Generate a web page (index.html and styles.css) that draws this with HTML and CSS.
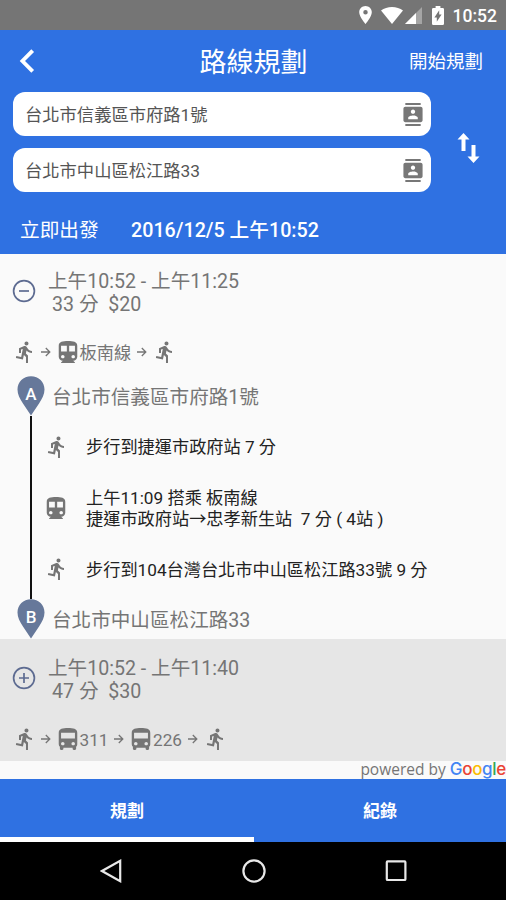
FILE: index.html
```html
<!DOCTYPE html>
<html lang="zh-Hant">
<head>
<meta charset="utf-8">
<title>路線規劃</title>
<link rel="stylesheet" href="styles.css">
</head>
<body>
<svg class="defs" width="0" height="0">
  <symbol id="run" viewBox="0 0 24 24"><path d="M13.49 5.48c1.1 0 2-.9 2-2s-.9-2-2-2-2 .9-2 2 .9 2 2 2zm-3.6 13.9l1-4.4 2.1 2v6h2v-7.5l-2.1-2 .6-3c1.3 1.5 3.3 2.5 5.5 2.5v-2c-1.9 0-3.5-1-4.3-2.4l-1-1.6c-.4-.6-1-1-1.7-1-.3 0-.5.1-.8.1l-5.2 2.2v4.7h2v-3.4l1.8-.7-1.6 8.1-4.9-1-.4 2 7 1.4z"/></symbol>
  <symbol id="train" viewBox="4 2 16 19"><path d="M12 2c-4.42 0-8 .5-8 4v9.5C4 17.43 5.57 19 7.5 19L6 20.5v.5h12v-.5L16.5 19c1.93 0 3.5-1.57 3.5-3.5V6c0-3.5-3.58-4-8-4zM7.5 17c-.83 0-1.5-.67-1.5-1.5S6.67 14 7.5 14s1.5.67 1.5 1.5S8.33 17 7.5 17zm3.5-6H6V6h5v5zm5.5 6c-.83 0-1.5-.67-1.5-1.5s.67-1.5 1.5-1.5 1.5.67 1.5 1.5-.67 1.5-1.5 1.5zm1.5-6h-5V6h5v5z"/></symbol>
  <symbol id="bus" viewBox="4 2 16 19"><path d="M4 16c0 .88.39 1.67 1 2.22V20c0 .55.45 1 1 1h1c.55 0 1-.45 1-1v-1h8v1c0 .55.45 1 1 1h1c.55 0 1-.45 1-1v-1.78c.61-.55 1-1.34 1-2.22V6c0-3.5-3.58-4-8-4s-8 .5-8 4v10zm3.5 1c-.83 0-1.5-.67-1.5-1.5S6.67 14 7.5 14s1.5.67 1.5 1.5S8.33 17 7.5 17zm9 0c-.83 0-1.5-.67-1.5-1.5s.67-1.5 1.5-1.5 1.5.67 1.5 1.5-.67 1.5-1.5 1.5zm1.5-6H6V6h12v5z"/></symbol>
  <symbol id="contacts" viewBox="2 0 20 24"><path d="M20 0H4v2h16V0zM4 24h16v-2H4v2zM20 4H4c-1.100 0-2 .9-2 2v12c0 1.100.9 2 2 2h16c1.100 0 2-.9 2-2V6c0-1.100-.9-2-2-2zm-8 2.750c1.240 0 2.250 1.010 2.250 2.250s-1.010 2.250-2.250 2.250S9.750 10.240 9.750 9 10.760 6.750 12 6.750zM17 17H7v-1.500c0-1.670 3.330-2.500 5-2.500s5 .83 5 2.500V17z"/></symbol>
  <symbol id="arrow" viewBox="0 0 10 12"><path d="M0 6h8.500M4.800 2l4 4-4 4" fill="none" stroke="currentColor" stroke-width="1.300"/></symbol>
  <symbol id="marker" viewBox="0 0 28 40"><path d="M14 .3C6.300.3.5 6 .5 13.600c0 4.900 2.300 9.200 5.300 13.600L14 39.500l8.200-12.300c3-4.400 5.300-8.700 5.300-13.600C27.500 6 21.700.3 14 .3z"/></symbol>
</svg>

<div class="status">
  <svg class="st-pin" viewBox="5 2 14 20"><path d="M12 2C8.130 2 5 5.130 5 9c0 5.250 7 13 7 13s7-7.750 7-13c0-3.870-3.130-7-7-7zm0 9.500a2.500 2.500 0 1 1 0-5 2.500 2.500 0 0 1 0 5z"/></svg>
  <svg class="st-wifi" viewBox="0 0 22 17"><path d="M11 17L0 3.600C3 1.300 6.800 0 11 0s8 1.300 11 3.600z"/></svg>
  <svg class="st-cell" viewBox="0 0 17 17"><path d="M17 0v17H0z" opacity=".35"/><path d="M11 6v11H0z"/></svg>
  <svg class="st-batt" viewBox="7 2 10 20" preserveAspectRatio="none"><path fill-rule="evenodd" d="M15.670 4H14V2h-4v2H8.330C7.600 4 7 4.600 7 5.330v15.330C7 21.400 7.600 22 8.330 22h7.330c.74 0 1.340-.6 1.340-1.330V5.330C17 4.600 16.400 4 15.670 4zM11 18.500V14H9l4-7.500V11h2z"/></svg>
  <span class="clock">10:52</span>
</div>

<header class="header">
  <div class="titlebar">
    <svg class="back" viewBox="0 0 14 22"><path d="M12.200 1.500L2.800 11l9.400 9.500"/></svg>
    <h1>路線規劃</h1>
    <span class="start">開始規劃</span>
  </div>
  <div class="search">
    <div class="fields">
      <div class="field"><span>台北市信義區市府路1號</span><svg><use href="#contacts"/></svg></div>
      <div class="field"><span>台北市中山區松江路33</span><svg><use href="#contacts"/></svg></div>
    </div>
    <svg class="swap" viewBox="0 0 22 30"><path d="M6 0l6 6.500H8V18H4V6.500H0zM14 12h4v11.500h4L16 30l-6-6.500h4z"/></svg>
  </div>
  <div class="when"><span class="now">立即出發</span><span>2016/12/5 上午10:52</span></div>
</header>

<main>
  <section class="plan">
    <div class="summary">
      <svg class="toggle" viewBox="0 0 24 24"><circle cx="12" cy="12" r="10.400"/><path d="M7 12h10"/></svg>
      <div class="times"><div>上午10:52 - 上午11:25</div><div class="cost">33 分&nbsp; $20</div></div>
    </div>
    <div class="chain">
      <svg class="run"><use href="#run"/></svg><svg class="arr"><use href="#arrow"/></svg><svg class="veh"><use href="#train"/></svg><span>板南線</span><svg class="arr"><use href="#arrow"/></svg><svg class="run"><use href="#run"/></svg>
    </div>
    <div class="place"><div class="pin"><svg><use href="#marker"/></svg><b>A</b></div><span>台北市信義區市府路1號</span></div>
    <div class="steps">
      <div class="step"><svg class="run"><use href="#run"/></svg><p>步行到捷運市政府站 7 分</p></div>
      <div class="step"><svg class="veh"><use href="#train"/></svg><p>上午11:09 搭乘 板南線<br>捷運市政府站→忠孝新生站&nbsp; 7 分 ( 4站 )</p></div>
      <div class="step"><svg class="run"><use href="#run"/></svg><p>步行到104台灣台北市中山區松江路33號 9 分</p></div>
    </div>
    <div class="place"><div class="pin"><svg><use href="#marker"/></svg><b>B</b></div><span>台北市中山區松江路33</span></div>
  </section>
  <section class="plan alt">
    <div class="summary">
      <svg class="toggle" viewBox="0 0 24 24"><circle cx="12" cy="12" r="10.400"/><path d="M7 12h10M12 7v10"/></svg>
      <div class="times"><div>上午10:52 - 上午11:40</div><div class="cost">47 分&nbsp; $30</div></div>
    </div>
    <div class="chain">
      <svg class="run"><use href="#run"/></svg><svg class="arr"><use href="#arrow"/></svg><svg class="veh"><use href="#bus"/></svg><span>311</span><svg class="arr"><use href="#arrow"/></svg><svg class="veh"><use href="#bus"/></svg><span>226</span><svg class="arr"><use href="#arrow"/></svg><svg class="run"><use href="#run"/></svg>
    </div>
  </section>
  <div class="powered">powered by <span class="google"><span class="b">G</span><span class="r">o</span><span class="y">o</span><span class="b">g</span><span class="g">l</span><span class="r">e</span></span></div>
</main>

<div class="tabs"><div class="tab active">規劃</div><div class="tab">紀錄</div></div>
<nav class="nav">
  <svg viewBox="0 0 24 24"><path d="M20.200 1.800v20.400L2 12z"/></svg>
  <svg viewBox="0 0 24 24"><circle cx="12" cy="12" r="10.600"/></svg>
  <svg viewBox="0 0 24 24"><rect x="2.800" y="2.400" width="18.600" height="18.600" rx=".8"/></svg>
</nav>
</body>
</html>
```
FILE: styles.css
```css
* { box-sizing: border-box; }
body {
  margin: 0;
  width: 506px;
  height: 900px;
  overflow: hidden;
  display: flex;
  flex-direction: column;
  background: #fafafa;
  font-family: Roboto, "Noto Sans CJK TC", sans-serif;
  color: #757575;
}
svg { display: block; flex: none; fill: currentColor; }
.defs { position: absolute; }

.status {
  height: 30px;
  flex: none;
  display: flex;
  align-items: center;
  padding: 0 9px 0 359px;
  background: #757575;
  color: #fff;
}
.st-pin { width: 13px; height: 18px; }
.st-wifi { width: 22px; height: 17px; margin-left: 9px; }
.st-cell { width: 17px; height: 17px; margin-left: 2px; }
.st-batt { width: 12px; height: 19px; margin-left: 10px; }
.clock { margin-left: auto; font-size: 17.500px; font-weight: 500; line-height: 30px; padding-top: 1px; }

.header { height: 224px; flex: none; background: #2f71e2; color: #fff; }
.titlebar {
  height: 62px;
  display: grid;
  grid-template-columns: 100px 1fr 100px;
  align-items: center;
  padding: 0 23px 0 19px;
}
.back { width: 16px; height: 24px; fill: none; stroke: #fff; stroke-width: 3.500; }
h1 { margin: 0 -5px 0 0; padding-top: 3px; text-align: center; font-size: 27px; font-weight: 400; line-height: 40px; }
.start { padding-top: 1px; text-align: right; font-size: 18.500px; line-height: 30px; }
.search { display: flex; align-items: center; padding-left: 13px; }
.fields { width: 418px; display: grid; gap: 12px; }
.field {
  height: 44px;
  display: flex;
  align-items: center;
  justify-content: space-between;
  padding: 0 8px 0 12px;
  border-radius: 12px;
  background: #fff;
  color: #555;
  font-size: 17.300px;
}
.field span { margin-top: -2px; }
.field svg { width: 20px; height: 23px; color: #777; }
.swap { width: 23px; height: 30px; margin: 12px 0 0 26px; }
.when { height: 60px; display: flex; padding: 17px 0 0 20px; font-size: 19.700px; font-weight: 500; line-height: 44px; }
.now { width: 111px; font-weight: 400; }

main { flex: 1; }
.plan { height: 385px; padding-top: 16px; }
.alt { height: 122px; background: #e6e6e6; padding-top: 18px; }
.summary { height: 46px; display: flex; align-items: center; padding-left: 12px; font-size: 19.600px; line-height: 23px; }
.toggle { width: 24px; height: 24px; margin: -4px 12px 0 0; fill: none; stroke: #5d6b91; stroke-width: 1.700; }
.cost { padding-left: 4px; }
.chain { height: 22px; margin-top: 25px; padding-left: 13px; display: flex; align-items: center; font-size: 17.200px; line-height: 22px; }
.chain span { padding-top: 1px; }
.alt .chain { margin-top: 25px; }
.run { width: 24px; height: 24px; }
.chain .run { margin-right: 3px; }
.arr { width: 10px; height: 12px; margin: 0 8px 0 1px; }
.veh { width: 20px; height: 22px; }
.chain .veh { margin: 0 1.500px 0 -1px; }
.chain span + .arr { margin-left: 6px; }
.chain .arr + .run { margin-left: -2px; }

.place { height: 40px; display: flex; align-items: center; padding-left: 17px; font-size: 19.600px; }
.chain + .place { margin-top: 13px; }
.pin { display: grid; width: 28px; height: 40px; margin-right: 7px; color: #66789a; }
.pin svg, .pin b { grid-area: 1 / 1; }
.pin svg { width: 28px; height: 40px; }
.pin b { text-align: center; color: #fff; font-size: 17px; font-weight: 500; line-height: 36px; }
.place span { margin-top: -1px; }
.steps { height: 183px; margin-left: 30px; border-left: 2px solid #111; display: grid; grid-template-rows: repeat(3, 61px); }
.step { display: grid; grid-template-columns: 40px 1fr; align-items: center; padding-left: 14px; }
.step .run { margin-left: -1px; }
.step p { margin: 0; padding-top: 2px; color: #222; font-size: 17.200px; font-weight: 400; line-height: 21px; }
.step:last-child p { padding-top: 4px; }

.powered { height: 18px; text-align: right; font-family: "Open Sans", sans-serif; font-size: 15.500px; line-height: 17px; white-space: nowrap; }
.google { font-family: Inter, sans-serif; font-size: 17px; font-weight: 500; letter-spacing: -.3px; }
.b { color: #4285f4; }
.r { color: #ea4335; }
.y { color: #fbbc05; }
.g { color: #34a853; }

.tabs { height: 63px; flex: none; display: grid; grid-template-columns: 254px 252px; background: #2f71e2; color: #fff; }
.tab { text-align: center; font-size: 17px; font-weight: 700; line-height: 64px; height: 63px; }
.active { border-bottom: 5px solid #fff; }
.nav { height: 58px; flex: none; display: flex; justify-content: space-between; padding: 17px 98px 0 100px; background: #000; color: #e8e8e8; }
.nav svg { width: 24px; height: 24px; fill: none; stroke: currentColor; stroke-width: 2.200; }
```
